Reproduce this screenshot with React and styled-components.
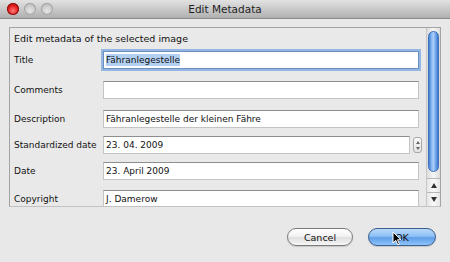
import React from "react";
import styled, { createGlobalStyle } from "styled-components";

const Global = createGlobalStyle`
  html, body { margin: 0; padding: 0; background: #e8e8e8; }
  body { font-family: "DejaVu Sans", "Noto Sans", sans-serif; }
`;

const Window = styled.div`
  width: 450px;
  height: 262px;
  display: flex;
  flex-direction: column;
  background: #e8e8e8;
  position: relative;
  overflow: hidden;
`;

const TitleBar = styled.div`
  height: 18px;
  display: grid;
  grid-template-columns: 1fr auto 1fr;
  align-items: center;
  background: linear-gradient(#e2e2e2, #b0b0b0);
  border-bottom: 1px solid #8c8c8c;
  padding: 0 7px;
`;

const Lights = styled.div`
  display: flex;
  gap: 5px;
`;

const Light = styled.div`
  width: 12px;
  height: 12px;
  border-radius: 50%;
  background: ${(p) =>
    p.$red
      ? "radial-gradient(circle at 50% 65%, #ff7a7a 0%, #e01818 55%, #9a0c0c 100%)"
      : "radial-gradient(circle at 50% 65%, #e6e6e6 0%, #c6c6c6 60%, #a6a6a6 100%)"};
  box-shadow: inset 0 0 0 1px ${(p) => (p.$red ? "#8a1010" : "#a4a4a4")};
`;

const Title = styled.div`
  font-size: 10.5px;
  color: #1e1e1e;
  text-align: center;
`;

const Body = styled.div`
  padding: 8px 9px 0 9px;
`;

const Panel = styled.div`
  height: 178px;
  border: 1px solid #a4a4a4;
  border-bottom: 1px solid #c2c2c2;
  display: flex;
  background: #e9e9e9;
  overflow: hidden;
`;

const Content = styled.div`
  flex: 1;
  padding: 4px 7px 0 4px;
  overflow: hidden;
`;

const Heading = styled.div`
  font-size: 9.5px;
  color: #111;
  height: 14px;
  line-height: 14px;
  white-space: nowrap;
`;

const Row = styled.div`
  display: flex;
  align-items: center;
  margin-top: ${(p) => p.$mt}px;
  height: 18px;
`;

const Label = styled.div`
  width: 89px;
  flex: none;
  font-size: 9px;
  color: #111;
  white-space: nowrap;
`;

const Field = styled.div`
  flex: 1;
  height: 18px;
  box-sizing: border-box;
  background: #fff;
  border: 1px solid #c4c4c4;
  border-top-color: #8e8e8e;
  font-size: 9px;
  color: #111;
  line-height: 16px;
  padding-left: 2px;
  white-space: nowrap;
  overflow: hidden;
  ${(p) =>
    p.$focus &&
    `border-color: #6c8fbf; box-shadow: 0 0 0 2px #93b6e2;`}
`;

const Selected = styled.span`
  background: #b3d0f2;
  padding: 1px 0;
`;

const Stepper = styled.div`
  width: 9px;
  height: 16px;
  margin-left: 3px;
  margin-right: -3px;
  border: 1px solid #a8a8a8;
  border-radius: 3px;
  background: linear-gradient(#fafafa, #e2e2e2);
  display: flex;
  flex-direction: column;
  align-items: center;
  justify-content: space-around;
  padding: 1px 0;
  box-sizing: border-box;
`;

const Tri = styled.div`
  width: 0;
  height: 0;
  border-left: 2px solid transparent;
  border-right: 2px solid transparent;
  ${(p) => (p.$down ? "border-top: 3px solid #666;" : "border-bottom: 3px solid #666;")}
`;

const ScrollBar = styled.div`
  width: 13px;
  flex: none;
  border-left: 1px solid #c8c8c8;
  background: linear-gradient(90deg, #dcdcdc, #f6f6f6 50%, #dcdcdc);
  display: flex;
  flex-direction: column;
`;

const Track = styled.div`
  flex: 1;
  padding: 3px 1px 0 1px;
`;

const Thumb = styled.div`
  height: 141px;
  border-radius: 6px;
  border: 1px solid #3e6fb8;
  box-sizing: border-box;
  background: linear-gradient(
    90deg,
    #3f7fd8 0%,
    #8fbaf0 30%,
    #a9cdf7 50%,
    #6fa3ea 75%,
    #3b78d0 100%
  );
`;

const Arrow = styled.div`
  height: 13px;
  display: flex;
  align-items: center;
  justify-content: center;
  border-top: 1px solid #b8b8b8;
  background: linear-gradient(90deg, #e6e6e6, #fafafa 50%, #e6e6e6);
`;

const ArrowTri = styled.div`
  width: 0;
  height: 0;
  border-left: 3px solid transparent;
  border-right: 3px solid transparent;
  ${(p) => (p.$down ? "border-top: 5px solid #333;" : "border-bottom: 5px solid #333;")}
`;

const Footer = styled.div`
  display: flex;
  justify-content: flex-end;
  gap: 15px;
  padding: 21px 14px 0 0;
`;

const Button = styled.div`
  width: ${(p) => (p.$primary ? 68 : 66)}px;
  height: 18px;
  box-sizing: border-box;
  border-radius: 9px;
  display: flex;
  align-items: center;
  justify-content: center;
  font-size: 9.5px;
  color: #111;
  border: 1px solid ${(p) => (p.$primary ? "#3d5f8e" : "#7c7c7c")};
  background: ${(p) =>
    p.$primary
      ? "linear-gradient(#b8d8fa 0%, #8ec0f4 45%, #5f9ee9 55%, #8cc4fb 100%)"
      : "linear-gradient(#ffffff 0%, #f2f2f2 45%, #e0e0e0 55%, #f6f6f6 100%)"};
  box-shadow: 0 1px 1px rgba(0, 0, 0, 0.15);
`;

const Cursor = styled.svg`
  position: absolute;
  left: 392px;
  top: 231px;
`;

export default function App() {
  return (
    <>
      <Global />
      <Window>
        <TitleBar>
          <Lights>
            <Light $red />
            <Light />
            <Light />
          </Lights>
          <Title>Edit Metadata</Title>
          <div />
        </TitleBar>
        <Body>
          <Panel>
            <Content>
              <Heading>Edit metadata of the selected image</Heading>
              <Row $mt={5}>
                <Label>Title</Label>
                <Field $focus>
                  <Selected>Fähranlegestelle</Selected>
                </Field>
              </Row>
              <Row $mt={12}>
                <Label>Comments</Label>
                <Field />
              </Row>
              <Row $mt={11}>
                <Label>Description</Label>
                <Field>Fähranlegestelle der kleinen Fähre</Field>
              </Row>
              <Row $mt={8}>
                <Label>Standardized date</Label>
                <Field>23. 04. 2009</Field>
                <Stepper>
                  <Tri />
                  <Tri $down />
                </Stepper>
              </Row>
              <Row $mt={8}>
                <Label>Date</Label>
                <Field>23. April 2009</Field>
              </Row>
              <Row $mt={10}>
                <Label>Copyright</Label>
                <Field>J. Damerow</Field>
              </Row>
            </Content>
            <ScrollBar>
              <Track>
                <Thumb />
              </Track>
              <Arrow>
                <ArrowTri />
              </Arrow>
              <Arrow>
                <ArrowTri $down />
              </Arrow>
            </ScrollBar>
          </Panel>
        </Body>
        <Footer>
          <Button>Cancel</Button>
          <Button $primary>OK</Button>
        </Footer>
        <Cursor width="10" height="15" viewBox="0 0 10 15">
          <path d="M1 1 L1 12 L3.8 9.4 L5.8 13.8 L7.4 13.1 L5.5 8.8 L9 8.8 Z" fill="#000" stroke="#fff" strokeWidth="1" />
        </Cursor>
      </Window>
    </>
  );
}
